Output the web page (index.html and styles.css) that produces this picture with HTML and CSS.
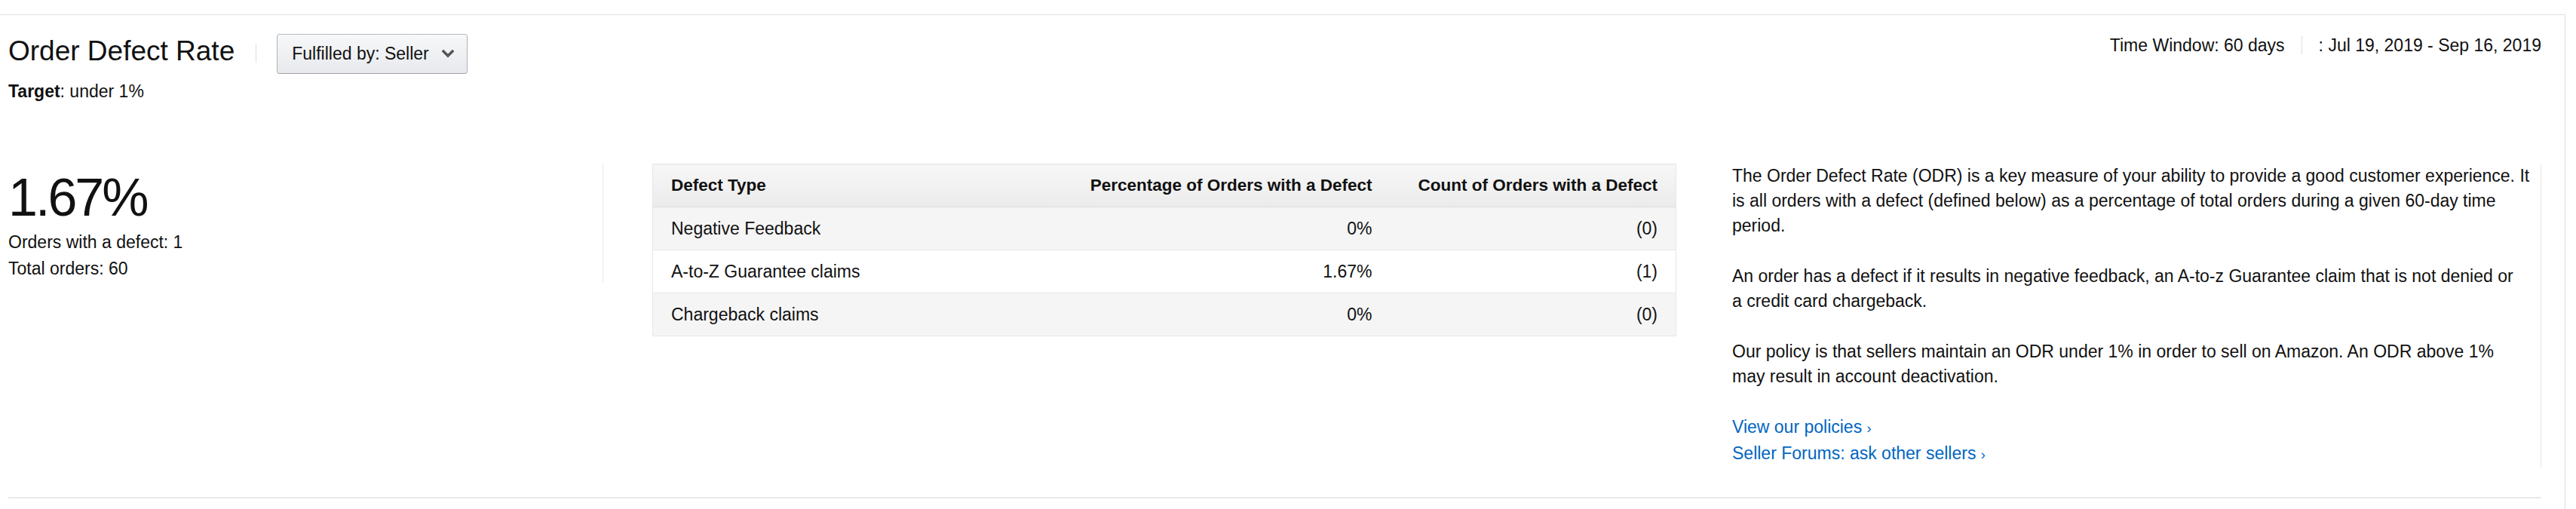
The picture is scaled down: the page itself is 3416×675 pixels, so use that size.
FILE: index.html
```html
<!DOCTYPE html>
<html lang="en">
<head>
<meta charset="utf-8">
<title>Order Defect Rate</title>
<link rel="stylesheet" href="styles.css">
</head>
<body>
<div class="card">
  <div class="section">
    <div class="header">
      <div class="header-left">
        <h1 class="title">Order Defect Rate</h1>
        <span class="vsep"></span>
        <button class="dropdown" type="button">
          <span>Fulfilled by: Seller</span>
          <svg class="chev" width="16" height="11" viewBox="0 0 16 11"><polyline points="2,2 8,8 14,2" fill="none" stroke="#555" stroke-width="3.4" stroke-linecap="square"/></svg>
        </button>
      </div>
      <div class="window">
        <span>Time Window: 60 days</span>
        <span class="wsep"></span>
        <span>: Jul 19, 2019 - Sep 16, 2019</span>
      </div>
    </div>
    <div class="target"><b>Target</b>: under 1%</div>
    <div class="body">
      <div class="summary">
        <div class="rate">1.67%</div>
        <div class="line">Orders with a defect: 1</div>
        <div class="line">Total orders: 60</div>
      </div>
      <div class="table-wrap">
        <table class="defects">
          <colgroup><col class="c1"><col class="c2"><col class="c3"></colgroup>
          <thead>
            <tr><th>Defect Type</th><th class="num">Percentage of Orders with a Defect</th><th class="num">Count of Orders with a Defect</th></tr>
          </thead>
          <tbody>
            <tr><td>Negative Feedback</td><td class="num">0%</td><td class="num">(0)</td></tr>
            <tr><td>A-to-Z Guarantee claims</td><td class="num">1.67%</td><td class="num">(1)</td></tr>
            <tr><td>Chargeback claims</td><td class="num">0%</td><td class="num">(0)</td></tr>
          </tbody>
        </table>
      </div>
      <div class="info">
        <p>The Order Defect Rate (ODR) is a key measure of your ability to provide a good customer experience. It<br>is all orders with a defect (defined below) as a percentage of total orders during a given 60-day time<br>period.</p>
        <p>An order has a defect if it results in negative feedback, an A-to-z Guarantee claim that is not denied or<br>a credit card chargeback.</p>
        <p>Our policy is that sellers maintain an ODR under 1% in order to sell on Amazon. An ODR above 1%<br>may result in account deactivation.</p>
        <div class="links">
          <a href="#">View our policies <span class="arr">›</span></a>
          <a href="#">Seller Forums: ask other sellers <span class="arr">›</span></a>
        </div>
      </div>
    </div>
  </div>
</div>
</body>
</html>
```
FILE: styles.css
```css
* { box-sizing: border-box; }
html, body { margin: 0; padding: 0; background: #fff; }
body {
  font-family: "Liberation Sans", Arial, sans-serif;
  color: #111;
  font-size: 23px;
}
.card {
  margin-top: 19px;
  width: 3402px;
  border-top: 1px solid #dddddd;
  border-right: 1px solid #dddddd;
  padding: 25px 31px 40px 11px;
}
.section {
  border-bottom: 2px solid #e8e8e8;
  padding-bottom: 39px;
}
.header {
  display: flex;
  justify-content: space-between;
  align-items: flex-start;
  height: 53px;
}
.header-left {
  display: flex;
  align-items: flex-start;
}
.title {
  margin: 1px 0 0 0;
  font-size: 37px;
  font-weight: 400;
  line-height: 44px;
  white-space: nowrap;
}
.vsep {
  width: 1px;
  height: 25px;
  background: #dddddd;
  margin: 13px 27px 0 28px;
}
.dropdown {
  height: 53px;
  display: flex;
  align-items: center;
  gap: 17px;
  padding: 0 17px 0 19px;
  font-family: inherit;
  font-size: 23px;
  color: #111;
  border: 1px solid #adb1b8;
  border-top-color: #b3b6bc;
  border-bottom-color: #9ea2a8;
  border-radius: 4px;
  background: linear-gradient(to bottom, #f7f8fa, #e7e9ec);
  box-shadow: 0 1px 0 rgba(255,255,255,.6) inset;
  cursor: pointer;
  white-space: nowrap;
}
.chev { display: block; }
.window {
  margin-top: 2px;
  display: flex;
  align-items: center;
  font-size: 23px;
  line-height: 26px;
  white-space: nowrap;
}
.wsep {
  width: 1px;
  height: 24px;
  background: #dddddd;
  margin: 0 22px;
}
.target {
  margin-top: 10px;
  line-height: 26px;
}
.target b { font-weight: 700; }
.body {
  margin-top: 83px;
  display: flex;
  align-items: flex-start;
}
.summary {
  width: 789px;
  flex: none;
  border-right: 1px solid #e7e7e7;
}
.rate {
  font-size: 70px;
  line-height: 84px;
  padding-top: 3px;
  letter-spacing: -3px;
}
.line {
  line-height: 35px;
}
.table-wrap {
  margin-left: 65px;
  width: 1358px;
  flex: none;
}
.defects {
  width: 100%;
  border-collapse: collapse;
  table-layout: fixed;
  border: 1px solid #e7e7e7;
}
.defects .c2 { width: 452px; }
.defects .c3 { width: 379px; }
.defects th, .defects td {
  height: 57px;
  padding: 0 24px;
  text-align: left;
  white-space: nowrap;
  vertical-align: middle;
}
.defects th {
  font-size: 22.5px;
  font-weight: 700;
  background: linear-gradient(to bottom, #f7f7f7, #ebebeb);
  border-bottom: 1px solid #dedede;
}
.defects td {
  border-top: 1px solid #e7e7e7;
}
.defects tbody tr:nth-child(odd) td { background: #f5f5f5; }
.defects tbody tr:nth-child(even) td { background: #ffffff; }
.defects .num { text-align: right; }
.info {
  margin-left: 74px;
  flex: 1;
  border-right: 1px solid #e7e7e7;
  white-space: nowrap;
}
.info p {
  margin: 0 0 34px 0;
  line-height: 33px;
}
.links {
  display: flex;
  flex-direction: column;
  align-items: flex-start;
  line-height: 33px;
}
.links a {
  color: #0066c0;
  text-decoration: none;
}
.links .arr {
  font-size: 18px;
}
```
